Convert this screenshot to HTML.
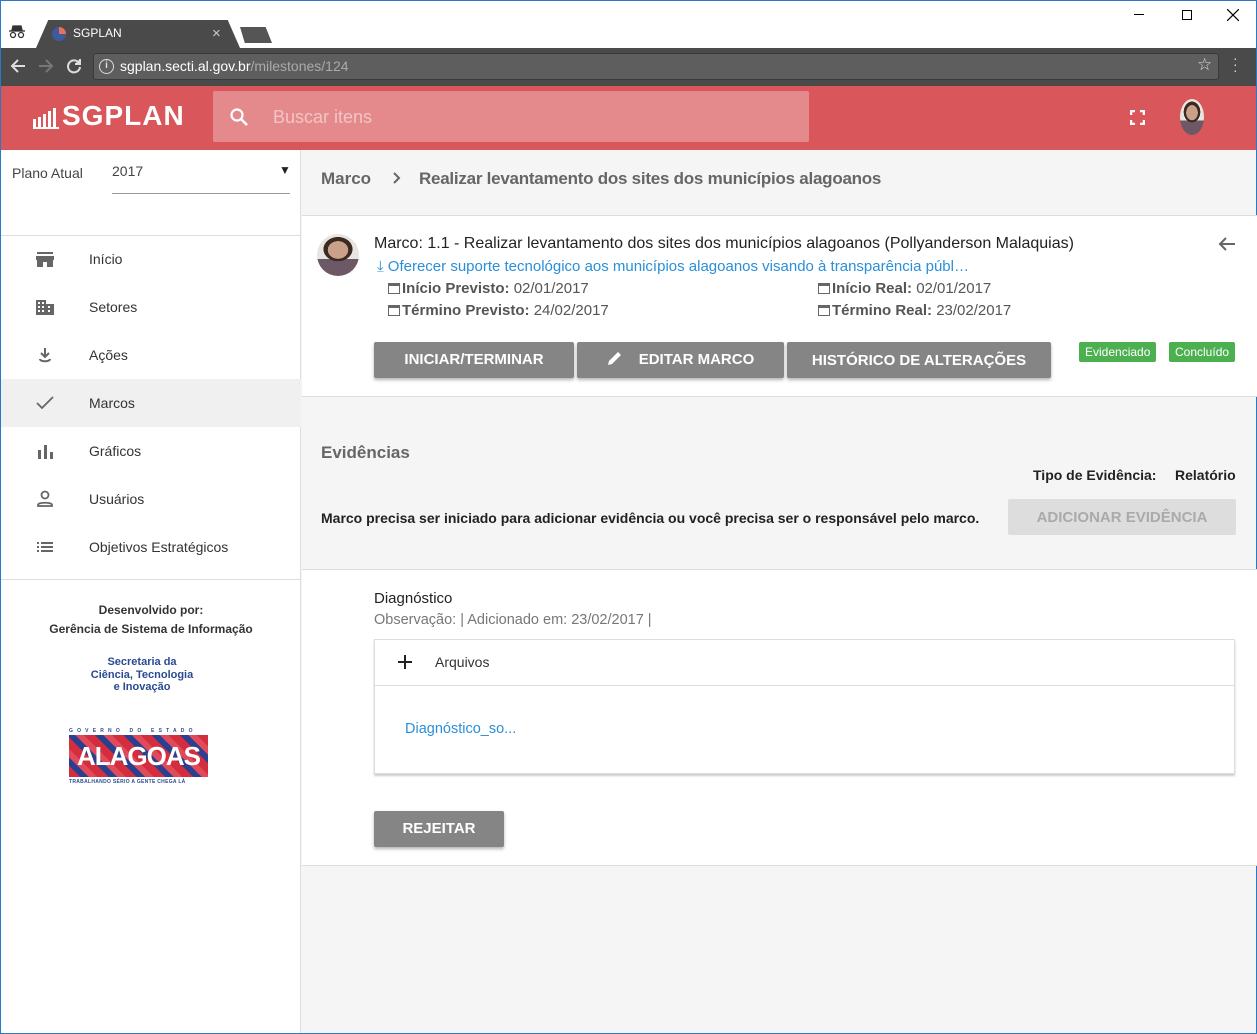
<!DOCTYPE html>
<html><head><meta charset="utf-8"><style>
*{margin:0;padding:0;box-sizing:border-box}
body{width:1257px;height:1034px;overflow:hidden;font-family:"Liberation Sans",sans-serif;background:#f5f5f5;position:relative;color:#333}
.a{position:absolute}
.btn{position:absolute;background:#858585;color:#fff;font-weight:bold;font-size:15px;text-align:center;border-radius:2px;box-shadow:0 2px 3px rgba(0,0,0,.3)}
.nav{position:absolute;left:1px;width:300px;height:48px;font-size:14px;color:#333}
.nav span{position:absolute;left:88px;top:16px}
.nav svg{position:absolute;left:34px;top:14px}
.cal{display:inline-block;width:12px;height:11px;border:1.5px solid #666;border-top-width:3px;margin-right:2px;vertical-align:-1px}
.tag{position:absolute;background:#4caf50;color:#fff;font-size:12px;padding:3px 6px;border-radius:2px}
.face{background:radial-gradient(ellipse 30% 26% at 50% 38%,#c9a08a 0 80%,transparent 82%),radial-gradient(ellipse 36% 30% at 50% 36%,#3a2a22 0 95%,transparent 97%),linear-gradient(#e8e4e0 0 60%,#6c5965 60%)}
</style></head><body>
<div class="a" style="left:0;top:0;width:1257px;height:48px;background:#fff"></div>
<div class="a" style="left:0;top:0;width:1257px;height:1px;background:#2b79c2"></div>
<div class="a" style="left:0;top:0;width:1px;height:1034px;background:#2b79c2"></div>
<div class="a" style="left:1256px;top:0;width:1px;height:1034px;background:#2b79c2"></div>
<div class="a" style="left:0;top:1033px;width:1257px;height:1px;background:#2b79c2"></div>
<svg class="a" style="left:9px;top:25px" width="16" height="14" fill="none" stroke="#333" stroke-width="1.3"><path d="M3 5l1-4h8l1 4z" fill="#333"/><line x1="0" y1="6" x2="16" y2="6"/><circle cx="4" cy="10" r="2.5"/><circle cx="12" cy="10" r="2.5"/></svg>
<div class="a" style="left:36px;top:20px;width:204px;height:28px;background:#4a4a4a;clip-path:polygon(6% 0,94% 0,100% 100%,0 100%)"></div>
<div class="a" style="left:52px;top:27px;width:14px;height:14px;border-radius:50%;background:conic-gradient(#e8715a 0 25%,#3e5a9c 25% 100%)"></div>
<div class="a" style="left:73px;top:26px;color:#fff;font-size:12px">SGPLAN</div>
<div class="a" style="left:212px;top:25px;color:#ccc;font-size:15px">×</div>
<div class="a" style="left:240px;top:27px;width:32px;height:16px;background:#555;clip-path:polygon(0 0,80% 0,100% 100%,15% 100%)"></div>
<div class="a" style="left:1134px;top:14px;width:10px;height:1px;background:#000"></div>
<div class="a" style="left:1182px;top:10px;width:10px;height:10px;border:1px solid #000"></div>
<svg class="a" style="left:1227px;top:9px" width="12" height="12" stroke="#000" stroke-width="1.2"><path d="M0 0L12 12M12 0L0 12"/></svg>
<div class="a" style="left:1px;top:48px;width:1255px;height:38px;background:#4a4a4a"></div>
<svg class="a" style="left:10px;top:58px" width="16" height="16" fill="none" stroke="#ddd" stroke-width="2"><path d="M15 8H2M8 2L2 8l6 6"/></svg>
<svg class="a" style="left:38px;top:58px" width="16" height="16" fill="none" stroke="#777" stroke-width="2"><path d="M1 8h13M8 2l6 6-6 6"/></svg>
<svg class="a" style="left:66px;top:58px" width="16" height="16" fill="none" stroke="#ddd" stroke-width="2"><path d="M13 5A6 6 0 1 0 14 9"/><path d="M14 1v5H9" fill="#ddd"/></svg>
<div class="a" style="left:93px;top:53px;width:1126px;height:27px;background:#5e5e5e;border-radius:3px;border:1px solid #3a3a3a"></div>
<div class="a" style="left:99px;top:59px;width:15px;height:15px;border:1.5px solid #ddd;border-radius:50%;color:#ddd;font-size:10px;text-align:center;line-height:12px;font-weight:bold">i</div>
<div class="a" style="left:120px;top:58px;font-size:14px;color:#fff">sgplan.secti.al.gov.br<span style="color:#aaa">/milestones/124</span></div>
<div class="a" style="left:1197px;top:55px;color:#ddd;font-size:17px">☆</div>
<div class="a" style="left:1233px;top:55px;color:#ddd;font-size:14px;line-height:6px">·<br>·<br>·</div>
<div class="a" style="left:1px;top:86px;width:1255px;height:64px;background:#d9575b"></div>
<svg class="a" style="left:33px;top:105px" width="26" height="24"><g fill="#fff"><rect x="0" y="14" width="3" height="9"/><rect x="5" y="12" width="3" height="11"/><rect x="10" y="9" width="3" height="14"/><rect x="15" y="6" width="3" height="17"/><rect x="20" y="3" width="3" height="20"/><rect x="0" y="22" width="26" height="2"/></g></svg>
<div class="a" style="left:62px;top:100px;font-size:28px;font-weight:bold;color:#fff;letter-spacing:1px">SGPLAN</div>
<div class="a" style="left:213px;top:91px;width:596px;height:51px;background:#e48a8c;border-radius:2px"></div>
<svg class="a" style="left:229px;top:107px" width="20" height="20"><circle cx="8" cy="8" r="5.5" stroke="#fff" stroke-width="2.2" fill="none"/><line x1="12" y1="12" x2="18" y2="18" stroke="#fff" stroke-width="2.5"/></svg>
<div class="a" style="left:273px;top:107px;font-size:18px;color:#f3c4c5">Buscar itens</div>
<svg class="a" style="left:1130px;top:110px" width="15" height="15" fill="none" stroke="#fff" stroke-width="2.5"><path d="M1 5V1h4M10 1h4v4M14 10v4h-4M5 14H1v-4"/></svg>
<div class="a face" style="left:1180px;top:99px;width:24px;height:36px;border-radius:50%"></div>
<div class="a" style="left:1px;top:150px;width:300px;height:883px;background:#fff;border-right:1px solid #ddd"></div>
<div class="a" style="left:12px;top:165px;font-size:14px;color:#444">Plano Atual</div>
<div class="a" style="left:112px;top:163px;font-size:14px;color:#444">2017</div>
<div class="a" style="left:279px;top:163px;font-size:12px;color:#222">▼</div>
<div class="a" style="left:112px;top:193px;width:178px;height:1px;background:#999"></div>
<div class="a" style="left:1px;top:235px;width:300px;height:1px;background:#ddd"></div>
<div class="nav" style="top:235px"><svg width="20" height="20"><path d="M2 3h16v2H2zM1 7h18v4h-1v7h-6v-5H8v5H2v-7H1z" fill="#666"/></svg><span>Início</span></div>
<div class="nav" style="top:283px"><svg width="20" height="20"><path d="M1 3h10v4h8v11H1z" fill="#666"/><g fill="#fff"><rect x="3" y="5" width="2" height="2"/><rect x="7" y="5" width="2" height="2"/><rect x="3" y="9" width="2" height="2"/><rect x="7" y="9" width="2" height="2"/><rect x="3" y="13" width="2" height="2"/><rect x="7" y="13" width="2" height="2"/><rect x="13" y="9" width="2" height="2"/><rect x="13" y="13" width="2" height="2"/></g></svg><span>Setores</span></div>
<div class="nav" style="top:331px"><svg width="20" height="20" fill="none" stroke="#666" stroke-width="2"><path d="M10 3v9M6 8l4 4 4-4M5 14c0 3 10 3 10 0"/></svg><span>Ações</span></div>
<div class="nav" style="top:379px;background:#f0f0f0"><svg width="20" height="20" fill="none" stroke="#666" stroke-width="1.8"><path d="M2 10l5 5L18 4"/></svg><span>Marcos</span></div>
<div class="nav" style="top:427px"><svg width="20" height="20" fill="#666"><rect x="3" y="9" width="3" height="9"/><rect x="9" y="4" width="3" height="14"/><rect x="15" y="11" width="3" height="7"/></svg><span>Gráficos</span></div>
<div class="nav" style="top:475px"><svg width="20" height="20" fill="none" stroke="#666" stroke-width="1.8"><circle cx="10" cy="6" r="3.5"/><path d="M3 17v-1c0-3 14-3 14 0v1z"/></svg><span>Usuários</span></div>
<div class="nav" style="top:523px"><svg width="20" height="20" fill="#666"><rect x="2" y="5" width="2" height="2"/><rect x="6" y="5" width="12" height="2"/><rect x="2" y="9" width="2" height="2"/><rect x="6" y="9" width="12" height="2"/><rect x="2" y="13" width="2" height="2"/><rect x="6" y="13" width="12" height="2"/></svg><span>Objetivos Estratégicos</span></div>
<div class="a" style="left:1px;top:579px;width:300px;height:1px;background:#ddd"></div>
<div class="a" style="left:1px;top:601px;width:300px;text-align:center;font-size:12px;font-weight:bold;color:#333;line-height:19px">Desenvolvido por:<br>Gerência de Sistema de Informação</div>
<div class="a" style="left:1px;top:656px;width:282px;text-align:center;font-size:11px;font-weight:bold;color:#2a4a92;line-height:12.5px">Secretaria da<br>Ciência, Tecnologia<br>e Inovação</div>
<div class="a" style="left:69px;top:728px;width:145px;font-size:5px;color:#2a4a92;letter-spacing:4.2px;font-weight:bold;white-space:nowrap">GOVERNO DO ESTADO</div>
<div class="a" style="left:69px;top:735px;width:139px;height:42px;background:repeating-linear-gradient(45deg,#d42d3d 0 8px,#2a3f8f 8px 14px,#e04a5a 14px 20px);color:#fff;font-weight:bold;font-size:26px;text-align:center;line-height:42px;letter-spacing:-1px">ALAGOAS</div>
<div class="a" style="left:69px;top:779px;width:139px;font-size:5px;color:#2a4a92;font-weight:bold;letter-spacing:.3px">TRABALHANDO SÉRIO A GENTE CHEGA LÁ</div>
<div class="a" style="left:321px;top:169px;font-size:17px;font-weight:bold;color:#666">Marco</div>
<svg class="a" style="left:392px;top:172px" width="10" height="12" fill="none" stroke="#666" stroke-width="2"><path d="M2 1l5 5-5 5"/></svg>
<div class="a" style="left:419px;top:169px;font-size:17px;font-weight:bold;color:#666;letter-spacing:-.25px">Realizar levantamento dos sites dos municípios alagoanos</div>
<div class="a" style="left:302px;top:215px;width:955px;height:182px;background:#fff;border-top:1px solid #ddd;border-bottom:1px solid #ddd"></div>
<div class="a face" style="left:317px;top:234px;width:42px;height:42px;border-radius:50%"></div>
<div class="a" style="left:374px;top:235px;font-size:16px;color:#222">Marco: 1.1 - Realizar levantamento dos sites dos municípios alagoanos (Pollyanderson Malaquias)</div>
<svg class="a" style="left:1218px;top:236px" width="18" height="16" fill="none" stroke="#666" stroke-width="2"><path d="M17 8H2M8 2L2 8l6 6"/></svg>
<div class="a" style="left:377px;top:258px;font-size:15px;color:#2a8fd8">⤓ Oferecer suporte tecnológico aos municípios alagoanos visando à transparência públ…</div>
<div class="a" style="left:388px;top:280px;font-size:15px;color:#555"><span class="cal"></span><b>Início Previsto:</b> 02/01/2017</div>
<div class="a" style="left:388px;top:302px;font-size:15px;color:#555"><span class="cal"></span><b>Término Previsto:</b> 24/02/2017</div>
<div class="a" style="left:818px;top:280px;font-size:15px;color:#555"><span class="cal"></span><b>Início Real:</b> 02/01/2017</div>
<div class="a" style="left:818px;top:302px;font-size:15px;color:#555"><span class="cal"></span><b>Término Real:</b> 23/02/2017</div>
<div class="btn" style="left:374px;top:342px;width:200px;height:36px;line-height:36px">INICIAR/TERMINAR</div>
<div class="btn" style="left:577px;top:342px;width:207px;height:36px;line-height:36px"><svg width="16" height="16" style="vertical-align:-2px;margin-right:16px"><path d="M1 15l1-4 9-9 3 3-9 9z" fill="#fff"/></svg>EDITAR MARCO</div>
<div class="btn" style="left:787px;top:342px;width:264px;height:36px;line-height:38px">HISTÓRICO DE ALTERAÇÕES</div>
<div class="tag" style="left:1079px;top:342px">Evidenciado</div>
<div class="tag" style="left:1169px;top:342px">Concluído</div>
<div class="a" style="left:321px;top:443px;font-size:17px;font-weight:bold;color:#666">Evidências</div>
<div class="a" style="left:1033px;top:467px;font-size:14px;font-weight:bold;color:#222">Tipo de Evidência:</div>
<div class="a" style="left:1175px;top:467px;font-size:14px;font-weight:bold;color:#222">Relatório</div>
<div class="a" style="left:321px;top:510px;font-size:14px;font-weight:bold;color:#222">Marco precisa ser iniciado para adicionar evidência ou você precisa ser o responsável pelo marco.</div>
<div class="a" style="left:1008px;top:499px;width:228px;height:36px;background:#ddd;color:#aaa;font-weight:bold;font-size:15px;text-align:center;line-height:38px;border-radius:2px">ADICIONAR EVIDÊNCIA</div>
<div class="a" style="left:302px;top:569px;width:955px;height:297px;background:#fff;border-top:1px solid #ddd;border-bottom:1px solid #ddd"></div>
<div class="a" style="left:374px;top:590px;font-size:15px;color:#222">Diagnóstico</div>
<div class="a" style="left:374px;top:612px;font-size:14.5px;color:#777">Observação: | Adicionado em: 23/02/2017 |</div>
<div class="a" style="left:374px;top:639px;width:861px;height:135px;background:#fff;border:1px solid #ddd;box-shadow:0 2px 2px rgba(0,0,0,.2)"></div>
<svg class="a" style="left:397px;top:654px" width="16" height="16" stroke="#222" stroke-width="2"><path d="M8 1v14M1 8h14"/></svg>
<div class="a" style="left:435px;top:654px;font-size:14px;color:#333">Arquivos</div>
<div class="a" style="left:375px;top:685px;width:859px;height:1px;background:#ddd"></div>
<div class="a" style="left:405px;top:721px;font-size:14.5px;color:#2a8fd8">Diagnóstico_so...</div>
<div class="btn" style="left:374px;top:811px;width:130px;height:36px;line-height:36px">REJEITAR</div>
</body></html>
